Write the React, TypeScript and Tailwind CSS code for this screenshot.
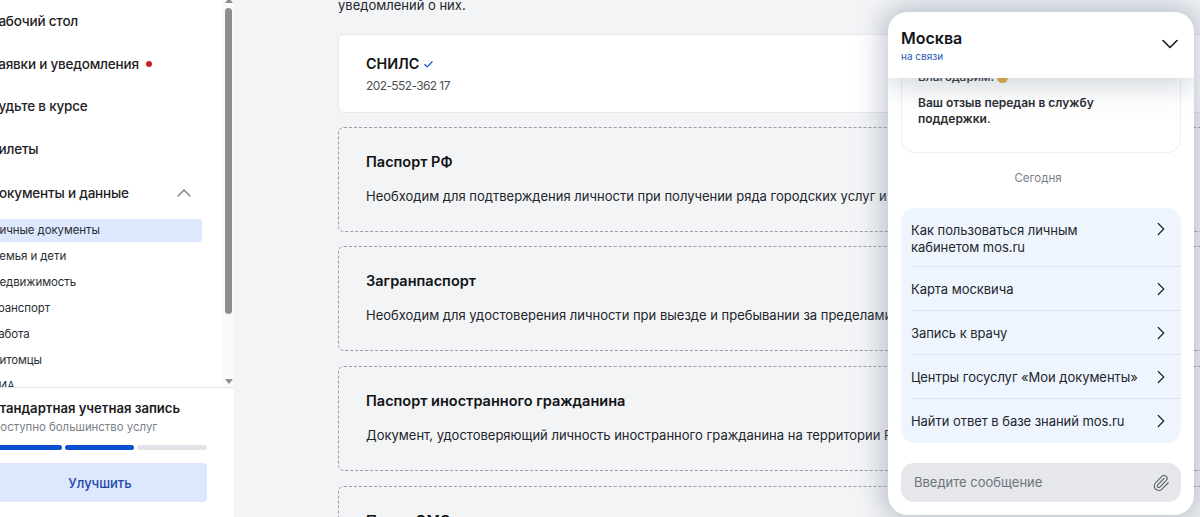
import { ChevronDown, ChevronRight, ChevronUp, Paperclip, Check } from "lucide-react";

const font = { fontFamily: "Inter, 'Noto Sans', sans-serif" };

const navItems = ["Рабочий стол", "Заявки и уведомления", "Будьте в курсе", "Билеты"];
const subItems = ["Личные документы", "Семья и дети", "Недвижимость", "Транспорт", "Работа", "Питомцы", "ВИА"];
const chatLinks = ["Как пользоваться личным кабинетом mos.ru", "Карта москвича", "Запись к врачу", "Центры госуслуг «Мои документы»", "Найти ответ в базе знаний mos.ru"];

const docs = [
  { title: "Паспорт РФ", text: "Необходим для подтверждения личности при получении ряда городских услуг и государственных" },
  { title: "Загранпаспорт", text: "Необходим для удостоверения личности при выезде и пребывании за пределами Российской" },
  { title: "Паспорт иностранного гражданина", text: "Документ, удостоверяющий личность иностранного гражданина на территории Российской" },
];

function Sidebar() {
  return (
    <aside className="w-[234px] h-full shrink-0 bg-white flex flex-col overflow-hidden">
      <div className="h-[388px] flex shrink-0 border-b border-[#e5e7eb]">
        <div className="w-[223px] overflow-hidden">
          {navItems.map((item, i) => (
            <div key={item} className="h-[42.6px] flex items-center -ml-[10px] text-[13.5px] tracking-[-0.2px] font-medium text-[#1f2226]">
              {item}
              {i === 1 && <span className="ml-[7px] w-[6px] h-[6px] rounded-full bg-[#d01f1f]" />}
            </div>
          ))}
          <div className="h-[45px] flex items-center -ml-[12px] text-[13.5px] tracking-[-0.2px] font-medium text-[#1f2226]">
            Документы и данные
            <ChevronUp className="w-[24px] h-[24px] ml-[43px] text-[#6b7280]" strokeWidth={1.2} />
          </div>
          <div className="mt-[4px]">
            {subItems.map((item, i) => (
              <div key={item} className={`h-[23px] mb-[3px] w-[202px] flex items-center rounded-r-[3px] overflow-hidden text-[11.5px] tracking-[-0.1px] text-[#2b2f33] ${i === 0 ? "bg-[#dde7fe]" : ""}`}>
                <span className="-ml-[9px]">{item}</span>
              </div>
            ))}
          </div>
        </div>
        <div className="w-[11px] bg-[#fafafa] flex flex-col items-center relative">
          <div className="absolute top-[-2px] w-0 h-0 border-l-[4px] border-r-[4px] border-b-[5px] border-l-transparent border-r-transparent border-b-[#8d8d8d]" />
          <div className="w-[7px] h-[306px] mt-[8px] bg-[#8d8d8d] rounded-full" />
          <div className="absolute bottom-[3px] w-0 h-0 border-l-[4px] border-r-[4px] border-t-[5px] border-l-transparent border-r-transparent border-t-[#8d8d8d]" />
        </div>
      </div>
      <div className="pt-[11px]">
        <div className="-ml-[10px] text-[13.1px] font-semibold text-[#1a1c1f] leading-[18px]">Стандартная учетная запись</div>
        <div className="-ml-[9px] mt-[1px] text-[11.4px] text-[#7b8087] leading-[18px]">Доступно большинство услуг</div>
        <div className="flex gap-[3px] w-[207px] mt-[9px]">
          <div className="h-[5px] flex-1 -ml-[3px] rounded-r-full bg-[#0c4fd0]" />
          <div className="h-[5px] w-[69px] rounded-full bg-[#0c4fd0]" />
          <div className="h-[5px] w-[70px] rounded-full bg-[#e1e3e8]" />
        </div>
        <div className="mt-[13px] w-[207px] h-[39px] pr-[7px] pt-[2px] rounded-r-[4px] bg-[#dde7fe] flex items-center justify-center text-[13px] font-medium text-[#1d47a8]">
          Улучшить
        </div>
      </div>
    </aside>
  );
}

function Main() {
  return (
    <main className="flex-1 min-w-0 overflow-hidden pl-[104px]">
      <div className="w-[900px] -mt-[5px]">
        <p className="text-[13px] leading-[20px] text-[#22252a]">уведомлений о них.</p>
        <div className="mt-[19px] h-[79px] mb-[-1px] bg-white border border-[#e5e7eb] rounded-[6px] pl-[27px] pt-[19px]">
          <div className="flex items-center gap-[4px] text-[14.3px] leading-[20px] font-semibold text-[#111315]">
            СНИЛС
            <Check className="w-[11px] h-[11px] text-[#0c4fd0]" strokeWidth={2.5} />
          </div>
          <div className="mt-[3px] text-[12px] leading-[18px] tracking-[-0.6px] text-[#4b4f55]">202-552-362 17</div>
        </div>
        {docs.map((d) => (
          <div key={d.title} className="mt-[14.5px] h-[105px] border border-dashed border-[#9a9ea5] rounded-[6px] pl-[27px] pt-[24px]">
            <div className="text-[14.5px] leading-[20px] font-semibold text-[#111315] whitespace-nowrap">{d.title}</div>
            <div className="mt-[14px] text-[13px] leading-[20px] text-[#22252a] whitespace-nowrap">{d.text}</div>
          </div>
        ))}
        <div className="mt-[15px] h-[105px] border border-dashed border-[#9a9ea5] rounded-[6px] pl-[27px] pt-[24px]">
          <div className="text-[14.5px] leading-[20px] font-semibold text-[#111315]">Полис ОМС</div>
        </div>
      </div>
    </main>
  );
}

function Chat() {
  return (
    <div className="absolute left-[888px] top-[12px] w-[306px] h-[503px] rounded-[20px] bg-white overflow-hidden shadow-[0_0_24px_8px_rgba(100,116,139,0.35)] flex flex-col">
      <div className="h-[66px] shrink-0 relative z-10 bg-white flex items-start justify-between pl-[13px] pr-[10px] pt-[16px] shadow-[0_8px_28px_rgba(100,116,139,0.3)]">
        <div>
          <div className="text-[16px] leading-[21px] font-semibold text-[#14161a]">Москва</div>
          <div className="text-[10px] leading-[13px] mt-[1px] text-[#2a57b8]">на связи</div>
        </div>
        <ChevronDown className="w-[28px] h-[28px] mt-[2px] text-[#1a1c1f]" strokeWidth={1.4} />
      </div>
      <div className="mx-[13px] -mt-[10px] h-[85px] border border-t-0 border-[#eceef1] rounded-b-[14px] pl-[16px] pr-[17px]">
        <div className="flex items-center gap-[3px] text-[12px] font-medium leading-[18px] text-[#2a2d31]">
          Благодарим!
          <span className="w-[11px] h-[11px] rounded-full bg-[#e8a93a]" />
        </div>
        <div className="mt-[9px] text-[12px] font-semibold leading-[16px] text-[#2a2d31]">Ваш отзыв передан в службу поддержки.</div>
      </div>
      <div className="text-center text-[11.5px] leading-[16px] text-[#7b8087] mt-[17px] pr-[6px]">Сегодня</div>
      <div className="mx-[13px] mt-[22px] rounded-[14px] bg-[#eff5fe] pl-[10px]">
        {chatLinks.map((link, i) => (
          <div key={link} className={`flex justify-between border-[#dde4ee] ${i > 0 ? "border-t" : ""} ${i === 0 ? "h-[58px] pt-[13px] items-start" : "items-center"} ${i === 4 ? "h-[45px]" : i > 0 ? "h-[44px]" : ""}`}>
            <span className="w-[235px] text-[13px] tracking-[-0.05px] leading-[17px] pt-[1px] text-[#22252a]">{link}</span>
            <ChevronRight className={`w-[22px] h-[22px] mr-[9px] text-[#22252a] ${i === 0 ? "-mt-[3px]" : ""}`} strokeWidth={1.3} />
          </div>
        ))}
      </div>
      <div className="mx-[13px] mt-[20px] h-[39px] rounded-[13px] bg-[#e5e7eb] flex items-center justify-between pl-[13px] pr-[11px] text-[13px] text-[#6f747b]">
        Введите сообщение
        <Paperclip className="w-[18px] h-[18px] text-[#5f646b]" strokeWidth={1.5} />
      </div>
    </div>
  );
}

export default function App() {
  return (
    <div style={font} className="relative w-[1200px] h-[517px] overflow-hidden bg-[#f3f4f6] flex">
      <Sidebar />
      <Main />
      <Chat />
    </div>
  );
}
